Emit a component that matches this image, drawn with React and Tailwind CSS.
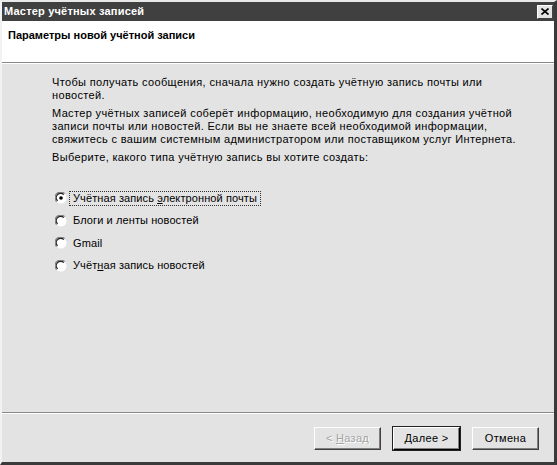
import React from 'react';

const font = { fontFamily: '"Liberation Sans", Arial, sans-serif' };

function Radio({ checked }) {
  return (
    <span className="inline-block w-[12px] h-[12px] shrink-0">
      <svg width="12" height="12" viewBox="0 0 12 12">
        <circle cx="6" cy="6" r="5.5" fill="#ffffff" />
        <path d="M1.7 9.6 A5.3 5.3 0 0 1 9.6 1.7" fill="none" stroke="#808080" strokeWidth="1.2" />
        <path d="M2.6 8.8 A4.2 4.2 0 0 1 8.8 2.6" fill="none" stroke="#222" strokeWidth="1.2" />
        {checked && <circle cx="6" cy="6" r="1.8" fill="#000" />}
      </svg>
    </span>
  );
}

function Option({ checked, focused, children }) {
  return (
    <div className="flex items-center h-[22.5px]">
      <Radio checked={checked} />
      <span
        className={
          'ml-[3px] px-[3px] leading-[13px] text-[11px] tracking-[0.1px] text-black ' +
          (focused ? 'outline outline-1 outline-dotted outline-[#333]' : '')
        }
      >
        {children}
      </span>
    </div>
  );
}

function Button({ children, disabled, primary }) {
  return (
    <button
      className={
        'w-[67px] h-[23px] text-[11px] tracking-[0.3px] bg-[#e3e3e3] border border-t-white border-l-white ' +
        (primary
          ? 'border-r-black border-b-black shadow-[inset_-1px_-1px_0_#808080,0_0_0_1px_#222] '
          : 'border-r-[#404040] border-b-[#404040] shadow-[inset_-1px_-1px_0_#808080] ') +
        (disabled ? 'text-[#a4a4a4] [text-shadow:1px_1px_0_#fff]' : 'text-black')
      }
      style={font}
    >
      {children}
    </button>
  );
}

export default function App() {
  return (
    <div
      className="w-[557px] h-[465px] flex flex-col bg-[#e3e3e3] border-l-2 border-l-[#f2f2f2] border-t-2 border-t-[#e9e9e9] border-r-[3px] border-r-[#3a3a3a] border-b-[3px] border-b-[#3a3a3a]"
      style={font}
    >
      <div className="h-[19px] bg-[#404040] flex items-center justify-between pl-[2px] pr-[1px]">
        <span className="text-white text-[11px] font-bold leading-none tracking-[0.2px]">Мастер учётных записей</span>
        <span className="w-[16px] h-[14px] bg-[#e3e3e3] border border-t-white border-l-white border-r-[#404040] border-b-[#404040] flex items-center justify-center">
          <svg width="8" height="7" viewBox="0 0 8 7">
            <path d="M0.5 0.5 L7.5 6.5 M7.5 0.5 L0.5 6.5" stroke="#000" strokeWidth="1.6" />
          </svg>
        </span>
      </div>
      <div className="h-[42px] bg-white pl-[6px] pt-[8px] border-b border-b-[#8a8a8a]">
        <div className="text-[11px] leading-[13px] font-bold text-black">Параметры новой учётной записи</div>
      </div>
      <div className="h-px bg-white" />
      <div className="flex-1 flex flex-col">
        <div className="pl-[50px] w-[520px] pt-[12px] text-[11px] leading-[13px] tracking-[0.35px] text-black">
          <p>Чтобы получать сообщения, сначала нужно создать учётную запись почты или новостей.</p>
          <p className="mt-[5px]">
            Мастер учётных записей соберёт информацию, необходимую для создания учётной записи почты или новостей. Если вы не знаете всей необходимой информации, свяжитесь с вашим системным администратором или поставщиком услуг Интернета.
          </p>
          <p className="mt-[5px]">Выберите, какого типа учётную запись вы хотите создать:</p>
        </div>
        <div className="pl-[53px] pt-[23px] flex flex-col">
          <Option checked focused>
            Учётная запись <u>э</u>лектронной почты
          </Option>
          <Option>Блоги и ленты новостей</Option>
          <Option>Gmail</Option>
          <Option>
            Учёт<u>н</u>ая запись новостей
          </Option>
        </div>
        <div className="flex-1" />
        <div className="h-px bg-[#8a8a8a]" />
        <div className="h-px bg-white" />
        <div className="h-[48px] flex items-start justify-end gap-[12px] pr-[15px] pt-[13px]">
          <Button disabled>
            &lt; <u>Н</u>азад
          </Button>
          <Button primary>
            <u>Д</u>алее &gt;
          </Button>
          <Button>Отмена</Button>
        </div>
      </div>
    </div>
  );
}
